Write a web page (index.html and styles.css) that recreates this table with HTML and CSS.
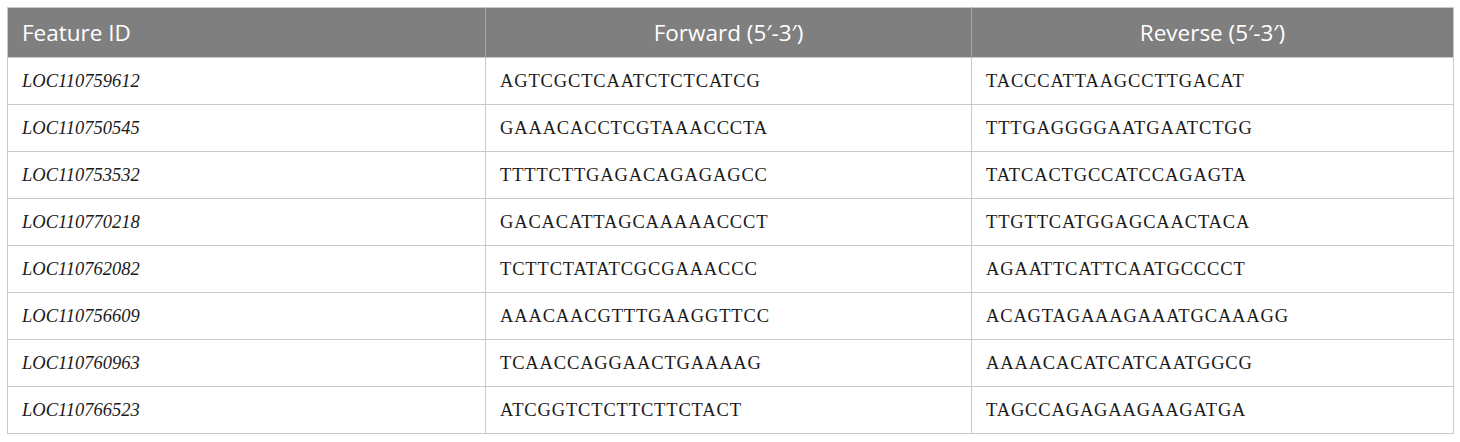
FILE: index.html
```html
<!DOCTYPE html>
<html>
<head>
<meta charset="utf-8">
<link rel="stylesheet" href="styles.css">
</head>
<body>
<table class="primers">
  <colgroup>
    <col class="c1"><col class="c2"><col class="c3">
  </colgroup>
  <thead>
    <tr><th class="left">Feature ID</th><th>Forward (5′-3′)</th><th>Reverse (5′-3′)</th></tr>
  </thead>
  <tbody>
    <tr><td class="id">LOC110759612</td><td>AGTCGCTCAATCTCTCATCG</td><td>TACCCATTAAGCCTTGACAT</td></tr>
    <tr><td class="id">LOC110750545</td><td>GAAACACCTCGTAAACCCTA</td><td>TTTGAGGGGAATGAATCTGG</td></tr>
    <tr><td class="id">LOC110753532</td><td>TTTTCTTGAGACAGAGAGCC</td><td>TATCACTGCCATCCAGAGTA</td></tr>
    <tr><td class="id">LOC110770218</td><td>GACACATTAGCAAAAACCCT</td><td>TTGTTCATGGAGCAACTACA</td></tr>
    <tr><td class="id">LOC110762082</td><td>TCTTCTATATCGCGAAACCC</td><td>AGAATTCATTCAATGCCCCT</td></tr>
    <tr><td class="id">LOC110756609</td><td>AAACAACGTTTGAAGGTTCC</td><td>ACAGTAGAAAGAAATGCAAAGG</td></tr>
    <tr><td class="id">LOC110760963</td><td>TCAACCAGGAACTGAAAAG</td><td>AAAACACATCATCAATGGCG</td></tr>
    <tr><td class="id">LOC110766523</td><td>ATCGGTCTCTTCTTCTACT</td><td>TAGCCAGAGAAGAAGATGA</td></tr>
  </tbody>
</table>
</body>
</html>
```
FILE: styles.css
```css
html, body {
  margin: 0;
  padding: 0;
  background: #ffffff;
}
body {
  padding: 7px 0 0 7px;
}
.primers {
  border-collapse: collapse;
  table-layout: fixed;
  width: 1446px;
  border: 1px solid #c9c9c9;
}
.c1 { width: 478px; }
.c2 { width: 486px; }
.c3 { width: 482px; }
.primers th {
  background: #7f7f7f;
  color: #ffffff;
  font-family: "Open Sans", "Noto Sans", sans-serif;
  font-weight: 400;
  font-size: 22.5px;
  height: 50px;
  padding: 0 14px;
  text-align: center;
  border-left: 1px solid #a8a8a8;
  box-sizing: border-box;
  vertical-align: middle;
}
.primers th.left {
  text-align: left;
  border-left: none;
}
.primers td {
  font-family: "Liberation Serif", "Times New Roman", serif;
  font-size: 18.5px;
  letter-spacing: 0.85px;
  color: #1a1a1a;
  height: 47px;
  padding: 0 14px;
  border: 1px solid #c9c9c9;
  box-sizing: border-box;
  vertical-align: middle;
}
.primers td.id {
  font-style: italic;
  letter-spacing: 0;
}
```
